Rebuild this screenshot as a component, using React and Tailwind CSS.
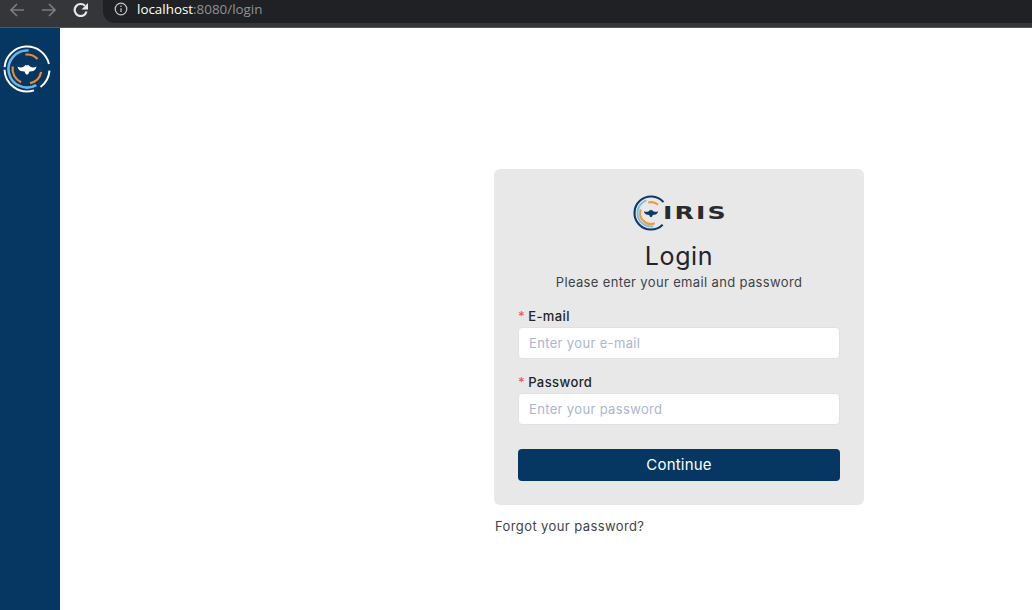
import React from 'react';

const polar = (cx, cy, r, deg) => {
  const rad = (deg * Math.PI) / 180;
  return [cx + r * Math.cos(rad), cy + r * Math.sin(rad)];
};

const arc = (r, from, to) => {
  const [x1, y1] = polar(24, 24, r, from);
  const [x2, y2] = polar(24, 24, r, to);
  const large = to - from > 180 ? 1 : 0;
  return `M${x1.toFixed(2)} ${y1.toFixed(2)}A${r} ${r} 0 ${large} 1 ${x2.toFixed(2)} ${y2.toFixed(2)}`;
};

const BIRD =
  'M14.500 21.500C16.500 22.800 19 22.800 21 21.500L23 19.800L24 20.800L25 19.800L27 21.500C29 22.800 31.500 22.800 33.500 21.500C33 24.300 31 26.300 28.500 26.300L26.500 26.600L25.300 29L24 29.800L22.700 29L21.500 26.600L19.500 26.300C17 26.300 15 24.300 14.500 21.500Z';

const SidebarLogo = () => (
  <svg viewBox="0 0 48 48" className="h-[48px] w-[48px]" fill="none">
    <path d={arc(22.500, 185, 347)} stroke="#ffffff" strokeWidth="2" />
    <path d={arc(22.500, 4, 53)} stroke="#ffffff" strokeWidth="2" />
    <path d={arc(22.500, 72, 178)} stroke="#ffffff" strokeWidth="2" />
    <path d={arc(18.500, 60, 275)} stroke="#6cb4e4" strokeWidth="2.600" />
    <path d={arc(14.500, 264, 317)} stroke="#ef8a2c" strokeWidth="2.200" />
    <path d={arc(14.500, 114, 190)} stroke="#ef8a2c" strokeWidth="2.200" />
    <path d={arc(14.500, 12, 78)} stroke="#ef8a2c" strokeWidth="2.200" />
    <path d={BIRD} fill="#ffffff" />
  </svg>
);

const BrandLogo = () => (
  <svg viewBox="0 0 48 48" className="h-9 w-9 shrink-0" fill="none">
    <path d={arc(22, 45, 319)} stroke="#0d3a66" strokeWidth="2.800" />
    <path d={arc(18, 80, 250)} stroke="#7cc0e8" strokeWidth="2.600" />
    <path d={arc(14.500, 70, 200)} stroke="#ef9a3c" strokeWidth="2.800" />
    <path d={arc(14.500, 255, 310)} stroke="#ef9a3c" strokeWidth="2.800" />
    <path d={BIRD} fill="#0d3a66" />
  </svg>
);

const Field = ({ label, placeholder, type }) => (
  <div>
    <label className="flex h-[21px] items-center text-[13px] font-medium tracking-[0.4px] text-[#212529]">
      <span className="mr-[3px] text-[#f1556c]">*</span>
      {label}
    </label>
    <input
      type={type}
      placeholder={placeholder}
      className="block h-8 w-full rounded border border-[#dee2e6] bg-white px-[10px] text-[13px] tracking-[0.35px] outline-none placeholder:text-[#adb5d0]"
    />
  </div>
);

const App = () => {
  return (
    <div className="flex h-[610px] w-[1032px] flex-col overflow-hidden bg-white font-['Inter',sans-serif]">
      <div className="flex h-[28px] shrink-0 items-start border-b border-[#55565a] bg-[#35363a]">
        <div className="flex h-[19px] w-[103px] items-center">
          <svg viewBox="0 0 16 16" className="ml-[9px] h-4 w-4" fill="none" stroke="#7b7c80" strokeWidth="1.700">
            <path d="M15 8H2M8 2 2 8l6 6" />
          </svg>
          <svg viewBox="0 0 16 16" className="ml-4 h-4 w-4" fill="none" stroke="#7b7c80" strokeWidth="1.700">
            <path d="M1 8h13M8 2l6 6-6 6" />
          </svg>
          <svg viewBox="0 0 16 16" className="ml-4 h-4 w-4" fill="none" stroke="#e8e8e8" strokeWidth="2.200">
            <path d="M13.500 9.500A6 6 0 1 1 12 3.800" />
            <path d="M15 1v6.500H8.500z" fill="#e8e8e8" stroke="none" />
          </svg>
        </div>
        <div className="flex h-[23px] flex-1 items-center rounded-bl-[12px] bg-[#202124] pb-[5px]">
          <svg viewBox="0 0 16 16" className="ml-[11px] h-[14px] w-[14px]" fill="none" stroke="#c4c6ca" strokeWidth="1.400">
            <circle cx="8" cy="8" r="6.600" />
            <path d="M8 7v4.500M8 4v1.600" />
          </svg>
          <span className="mt-[1px] ml-[9px] font-['Open_Sans',sans-serif] text-[13.400px] leading-none text-white">
            localhost<span className="text-[#8f9195]">:8080/login</span>
          </span>
        </div>
      </div>

      <div className="flex flex-1">
        <aside className="w-[60px] shrink-0 bg-[#063763] pt-[17px] pl-[3px]">
          <SidebarLogo />
        </aside>

        <main className="flex-1 pt-[141px] pl-[434px]">
          <div className="h-[336px] w-[370px] rounded-md bg-[#e8e8e8] px-6 pt-[26px]">
            <div className="flex h-9 items-center justify-center">
              <BrandLogo />
              <span className="-ml-[6px] w-[62px] origin-left scale-x-140 font-['DejaVu_Sans',sans-serif] text-[18px] leading-none font-bold tracking-[1.5px] text-[#2a2a2e]">
                IRIS
              </span>
            </div>
            <h1 className="mt-[7px] text-center text-[25px] leading-[36px] tracking-[0.6px] text-[#212529]">Login</h1>
            <p className="text-center text-[13px] leading-[16px] tracking-[0.35px] text-[#3f4347]">
              Please enter your email and password
            </p>
            <div className="mt-[16px] flex flex-col gap-[13px]">
              <Field label="E-mail" placeholder="Enter your e-mail" type="email" />
              <Field label="Password" placeholder="Enter your password" type="password" />
            </div>
            <button className="mt-6 h-8 w-full rounded bg-[#063763] pt-[1px] text-[15px] tracking-[0.2px] text-white">Continue</button>
          </div>
          <a className="mt-[12px] ml-[1px] block text-[13px] leading-[18px] tracking-[0.4px] text-[#3f4347]">
            Forgot your password?
          </a>
        </main>
      </div>
    </div>
  );
};

export default App;
